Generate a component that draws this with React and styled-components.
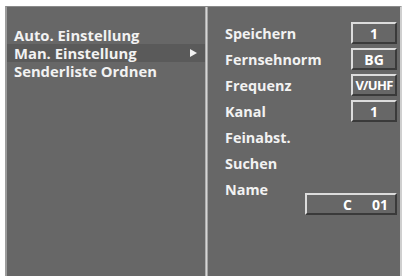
import React from 'react'
import styled, { createGlobalStyle } from 'styled-components'

const Global = createGlobalStyle`
  html, body { margin: 0; padding: 0; background: #ffffff; }
  body { font-family: "Open Sans", "DejaVu Sans", sans-serif; }
`

const Screen = styled.div`
  margin: 6px 0 0 5px;
  width: 397px;
  height: 270px;
  background: #676767;
  display: grid;
  grid-template-columns: 198px 3px 1fr;
  border-top: 1px solid #8a8a8a;
  border-left: 2px solid #9c9c9c;
  border-right: 2px solid #cfcfcf;
  box-sizing: border-box;
`

const LeftPanel = styled.div`
  padding-top: 19px;
  display: flex;
  flex-direction: column;
`

const Divider = styled.div`
  background: linear-gradient(to right, #9a9a9a, #d6d6d6, #8a8a8a);
`

const MenuItem = styled.div`
  height: 18px;
  display: flex;
  align-items: center;
  justify-content: space-between;
  padding: 0 8px 0 7px;
  font-size: 14.8px;
  font-weight: 700;
  color: #f2f2f2;
  background: ${({ $active }) => ($active ? '#5a5a5a' : 'transparent')};
`

const Arrow = styled.svg`
  width: 7px;
  height: 8px;
`

const RightPanel = styled.div`
  padding: 13px 3px 0 17px;
  display: flex;
  flex-direction: column;
`

const Row = styled.div`
  height: 26px;
  display: flex;
  align-items: center;
  justify-content: space-between;
`

const Label = styled.span`
  font-size: 14.4px;
  font-weight: 700;
  color: #f2f2f2;
`

const Box = styled.div`
  width: ${({ $w }) => $w}px;
  height: 22px;
  box-sizing: border-box;
  border-top: 2px solid #dcdcdc;
  border-left: 2px solid #dcdcdc;
  border-right: 2px solid #3a3a3a;
  border-bottom: 2px solid #3a3a3a;
  display: flex;
  align-items: center;
  justify-content: ${({ $spread }) => ($spread ? 'flex-end' : 'center')};
  gap: 20px;
  padding-right: ${({ $spread }) => ($spread ? '7px' : '0')};
  font-size: ${({ $tight }) => ($tight ? '13px' : '14px')};
  font-weight: 700;
  color: #ffffff;
  letter-spacing: ${({ $tight }) => ($tight ? '-0.7px' : '0')};
`

const NameRow = styled.div`
  margin-top: -9px;
  display: flex;
  justify-content: flex-end;
`

const fields = [
  { label: 'Speichern', value: '1' },
  { label: 'Fernsehnorm', value: 'BG' },
  { label: 'Frequenz', value: 'V/UHF', tight: true },
  { label: 'Kanal', value: '1' },
  { label: 'Feinabst.' },
  { label: 'Suchen' },
  { label: 'Name' },
]

export default function App() {
  return (
    <>
      <Global />
      <Screen>
        <LeftPanel>
          <MenuItem>Auto. Einstellung</MenuItem>
          <MenuItem $active>
            Man. Einstellung
            <Arrow viewBox="0 0 7 8">
              <polygon points="0,0 7,4 0,8" fill="#f2f2f2" />
            </Arrow>
          </MenuItem>
          <MenuItem>Senderliste Ordnen</MenuItem>
        </LeftPanel>
        <Divider />
        <RightPanel>
          {fields.map((f) => (
            <Row key={f.label}>
              <Label>{f.label}</Label>
              {f.value && (
                <Box $w={46} $tight={f.tight}>
                  {f.value}
                </Box>
              )}
            </Row>
          ))}
          <NameRow>
            <Box $w={92} $spread>
              <span>C</span>
              <span>01</span>
            </Box>
          </NameRow>
        </RightPanel>
      </Screen>
    </>
  )
}
